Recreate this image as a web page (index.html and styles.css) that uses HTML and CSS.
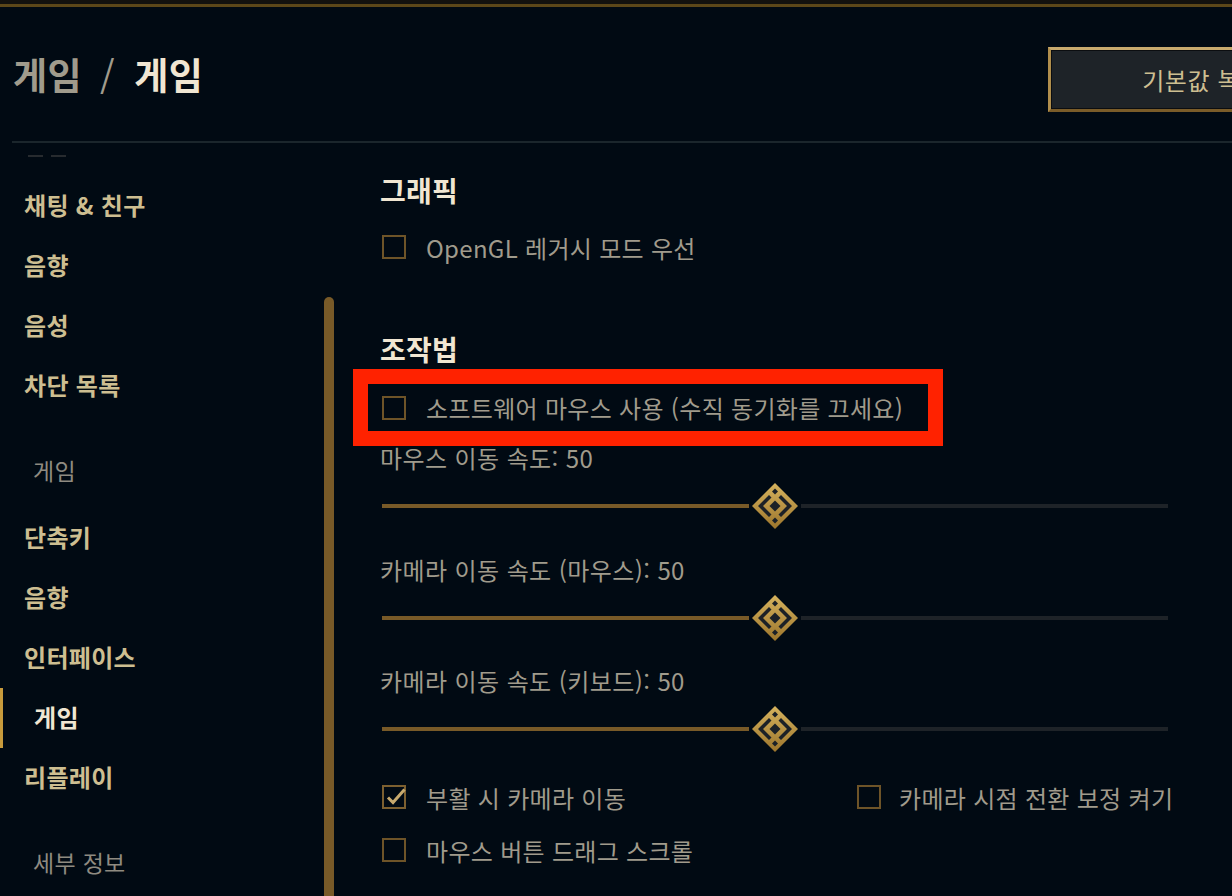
FILE: index.html
```html
<!DOCTYPE html>
<html lang="ko">
<head>
<meta charset="utf-8">
<title>게임 / 게임</title>
<link rel="stylesheet" href="styles.css">
</head>
<body>
<div class="topbar"></div>
<header class="header">
  <h1 class="title"><span class="crumb">게임</span><span class="sep">/</span><span class="current">게임</span></h1>
  <button class="reset">기본값 복원</button>
</header>
<div class="divider"></div>
<div class="main">
  <aside class="sidebar">
    <nav class="nav">
      <div class="cut"><span></span><span></span></div>
      <a class="item first">채팅 &amp; 친구</a>
      <a class="item">음향</a>
      <a class="item">음성</a>
      <a class="item">차단 목록</a>
      <div class="section">게임</div>
      <a class="item">단축키</a>
      <a class="item">음향</a>
      <a class="item">인터페이스</a>
      <a class="item active">게임</a>
      <a class="item">리플레이</a>
      <div class="section">세부 정보</div>
    </nav>
    <div class="scroll"><div class="scroll-thumb"></div></div>
  </aside>
  <section class="content">
    <h2 class="heading">그래픽</h2>
    <label class="check opengl"><span class="box"></span><span>OpenGL 레거시 모드 우선</span></label>

    <h2 class="heading controls">조작법</h2>
    <div class="highlight">
      <label class="check"><span class="box"></span><span>소프트웨어 마우스 사용 (수직 동기화를 끄세요)</span></label>
    </div>

    <div class="group first-group">
      <div class="slabel">마우스 이동 속도: 50</div>
      <div class="slider">
        <div class="fill"></div>
        <svg class="knob" viewBox="-24 -24 48 48" width="48" height="48">
          <defs>
            <linearGradient id="kg1" x1="0" y1="0" x2="0" y2="1">
              <stop offset="0" stop-color="#d6b35e"/>
              <stop offset="1" stop-color="#9c752c"/>
            </linearGradient>
          </defs>
          <polygon points="0,-23 23,0 0,23 -23,0" fill="url(#kg1)"/>
          <polygon points="-17,0 -6,-11 -3.5,-8.5 -12,0 -3.5,8.5 -6,11" fill="#1c2127"/>
          <polygon points="17,0 6,-11 3.5,-8.5 12,0 3.5,8.5 6,11" fill="#1c2127"/>
          <polygon points="0,-17.5 3,-14.5 0,-11.5 -3,-14.5" fill="#1c2127"/>
          <polygon points="0,17.5 3,14.5 0,11.5 -3,14.5" fill="#1c2127"/>
          <polygon points="0,-5.5 5.5,0 0,5.5 -5.5,0" fill="#1c2127"/>
        </svg>
        <div class="rest"></div>
      </div>
    </div>

    <div class="group">
      <div class="slabel">카메라 이동 속도 (마우스): 50</div>
      <div class="slider">
        <div class="fill"></div>
        <svg class="knob" viewBox="-24 -24 48 48" width="48" height="48">
          <defs>
            <linearGradient id="kg2" x1="0" y1="0" x2="0" y2="1">
              <stop offset="0" stop-color="#d6b35e"/>
              <stop offset="1" stop-color="#9c752c"/>
            </linearGradient>
          </defs>
          <polygon points="0,-23 23,0 0,23 -23,0" fill="url(#kg2)"/>
          <polygon points="-17,0 -6,-11 -3.5,-8.5 -12,0 -3.5,8.5 -6,11" fill="#1c2127"/>
          <polygon points="17,0 6,-11 3.5,-8.5 12,0 3.5,8.5 6,11" fill="#1c2127"/>
          <polygon points="0,-17.5 3,-14.5 0,-11.5 -3,-14.5" fill="#1c2127"/>
          <polygon points="0,17.5 3,14.5 0,11.5 -3,14.5" fill="#1c2127"/>
          <polygon points="0,-5.5 5.5,0 0,5.5 -5.5,0" fill="#1c2127"/>
        </svg>
        <div class="rest"></div>
      </div>
    </div>

    <div class="group">
      <div class="slabel">카메라 이동 속도 (키보드): 50</div>
      <div class="slider">
        <div class="fill"></div>
        <svg class="knob" viewBox="-24 -24 48 48" width="48" height="48">
          <defs>
            <linearGradient id="kg3" x1="0" y1="0" x2="0" y2="1">
              <stop offset="0" stop-color="#d6b35e"/>
              <stop offset="1" stop-color="#9c752c"/>
            </linearGradient>
          </defs>
          <polygon points="0,-23 23,0 0,23 -23,0" fill="url(#kg3)"/>
          <polygon points="-17,0 -6,-11 -3.5,-8.5 -12,0 -3.5,8.5 -6,11" fill="#1c2127"/>
          <polygon points="17,0 6,-11 3.5,-8.5 12,0 3.5,8.5 6,11" fill="#1c2127"/>
          <polygon points="0,-17.5 3,-14.5 0,-11.5 -3,-14.5" fill="#1c2127"/>
          <polygon points="0,17.5 3,14.5 0,11.5 -3,14.5" fill="#1c2127"/>
          <polygon points="0,-5.5 5.5,0 0,5.5 -5.5,0" fill="#1c2127"/>
        </svg>
        <div class="rest"></div>
      </div>
    </div>

    <div class="check-grid">
      <label class="check"><span class="box checked"><svg class="tick" viewBox="0 0 24 24" width="24" height="24"><polyline points="6,12.5 11,17.5 22.5,4.5" fill="none" stroke="#c8aa6e" stroke-width="3"/></svg></span><span>부활 시 카메라 이동</span></label>
      <label class="check"><span class="box"></span><span>카메라 시점 전환 보정 켜기</span></label>
    </div>
    <label class="check last"><span class="box"></span><span>마우스 버튼 드래그 스크롤</span></label>
  </section>
</div>
</body>
</html>
```
FILE: styles.css
```css
html, body {
  margin: 0;
  padding: 0;
}
body {
  width: 1232px;
  height: 896px;
  overflow: hidden;
  background: #010a13;
  font-family: "Noto Sans CJK KR", "Noto Sans", sans-serif;
  color: #a09b8c;
}

.topbar {
  height: 4px;
  background: #12110e;
  border-bottom: 3px solid #5c4719;
}

.header {
  height: 134px;
  display: flex;
  align-items: center;
  padding-left: 13px;
}
.title {
  margin: 0;
  font-size: 37px;
  font-weight: 700;
  line-height: 1;
  display: flex;
  align-items: center;
  white-space: nowrap;
  letter-spacing: 0.5px;
}
.crumb, .sep {
  color: #a09b8c;
}
.sep {
  margin: 0 19px 0 18px;
  font-weight: 400;
}
.current {
  color: #f0e6d2;
}
.reset {
  flex-shrink: 0;
  margin-left: auto;
  margin-right: -129px;
  margin-top: 11px;
  width: 313px;
  height: 65px;
  box-sizing: border-box;
  border: 3px solid #b08e4c;
  border-top-color: #c8aa6e;
  border-bottom-color: #7a5c29;
  box-shadow: inset 0 0 0 1px #0b0d10;
  background: #1e2328;
  color: #cdbe91;
  font-family: "Noto Sans CJK KR", "Noto Sans", sans-serif;
  font-size: 24px;
  letter-spacing: 0.6px;
  padding: 0 4px 0 0;
}

.divider {
  margin-left: 12px;
  height: 2px;
  background: #1b262c;
}

.main {
  display: flex;
  height: 753px;
}

.sidebar {
  width: 340px;
  flex-shrink: 0;
  display: flex;
}
.nav {
  width: 324px;
  padding-top: 12px;
}
.cut {
  display: flex;
  gap: 8px;
  padding-left: 28px;
  height: 2px;
}
.cut span {
  width: 15px;
  height: 2px;
  background: #272b2f;
}
.item {
  display: block;
  height: 60px;
  line-height: 58px;
  padding-left: 24px;
  font-size: 24px;
  letter-spacing: 0.3px;
  font-weight: 700;
  color: #cdbe91;
  white-space: nowrap;
}
.item.first {
  margin-top: 19px;
}
.item.active {
  color: #f0e6d2;
  padding-left: 31px;
  border-left: 3px solid #c89b3c;
}
.section {
  height: 60px;
  line-height: 58px;
  margin: 25px 0 7px;
  padding-left: 33px;
  font-size: 23px;
  letter-spacing: 0.3px;
  color: #8f8b81;
}
.scroll {
  width: 10px;
  padding-top: 154px;
  display: flex;
  flex-direction: column;
}
.scroll-thumb {
  flex: 1;
  background: #785a28;
  border-radius: 5px 5px 0 0;
}

.content {
  flex: 1;
  padding: 30px 0 0 40px;
}
.heading {
  margin: 0;
  height: 36px;
  line-height: 34px;
  font-size: 28px;
  letter-spacing: 0.3px;
  font-weight: 700;
  color: #f0e6d2;
}
.heading.controls {
  margin-top: 67px;
}
.check {
  display: flex;
  align-items: center;
  gap: 20px;
  height: 36px;
  font-size: 24px;
  letter-spacing: 0.3px;
  color: #a09b8c;
  white-space: nowrap;
}
.check.opengl {
  margin-top: 20px;
}
.box {
  width: 24px;
  height: 24px;
  box-sizing: border-box;
  border: 2px solid #6e5428;
  margin-left: 2px;
  flex-shrink: 0;
  position: relative;
}
.box.checked {
  border-color: #7d6030;
}
.tick {
  position: absolute;
  left: -2px;
  top: -2px;
  overflow: visible;
}

.highlight {
  margin-top: 1px;
  margin-left: -27px;
  width: 590px;
  height: 77px;
  box-sizing: border-box;
  border: 15px solid #ff2200;
  padding: 5.5px 0 0 12px;
}

.group {
  margin-top: 27.5px;
}
.group.first-group {
  margin-top: 0;
}
.slabel {
  height: 26px;
  line-height: 24px;
  font-size: 24px;
  letter-spacing: 0.4px;
  color: #a09b8c;
  white-space: nowrap;
}
.slider {
  margin-top: 10px;
  margin-left: 2px;
  width: 786px;
  height: 48px;
  display: flex;
  align-items: center;
}
.fill {
  flex: 1;
  height: 4px;
  background: #785a28;
}
.rest {
  flex: 1;
  height: 4px;
  background: #1e2328;
}
.knob {
  display: block;
  margin: 0 2px;
  flex-shrink: 0;
}

.check-grid {
  margin-top: 26px;
  display: grid;
  grid-template-columns: 475px auto;
}
.check-grid .check:nth-child(2) {
  gap: 18px;
}
.check.last {
  margin-top: 17px;
}
```
